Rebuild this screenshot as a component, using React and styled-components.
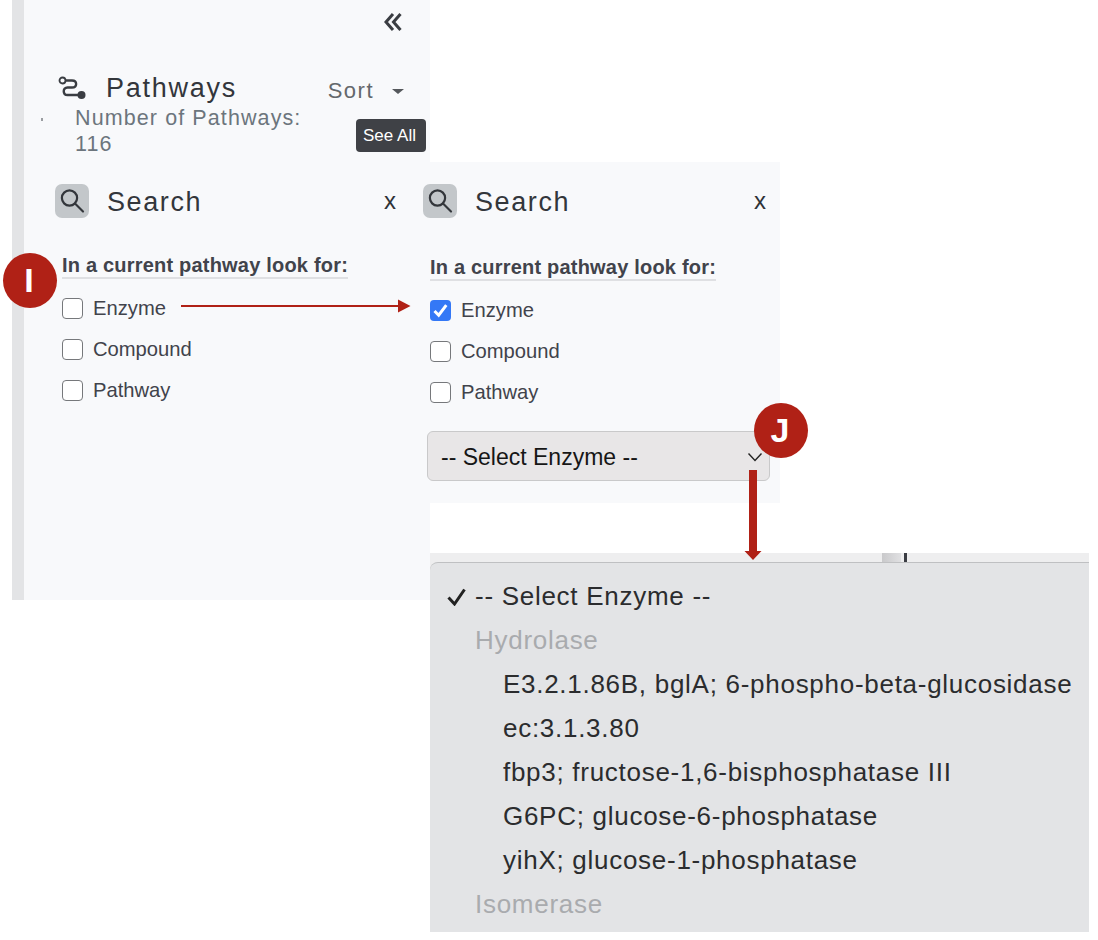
import React from "react";
import styled, { createGlobalStyle } from "styled-components";

const Global = createGlobalStyle`
  html, body { margin: 0; padding: 0; background: #fff; }
  body { font-family: "Liberation Sans", Arial, sans-serif; }
`;

const RED = "#b02116";

const Stage = styled.div`
  position: relative;
  width: 1098px;
  height: 940px;
  overflow: hidden;
  background: #fff;
`;

const Sidebar = styled.section`
  position: absolute;
  left: 12px;
  top: 0;
  width: 418px;
  height: 600px;
  box-sizing: border-box;
  background: #f8f9fb;
  border-left: 12px solid #e3e4e6;
  display: flex;
  flex-direction: column;
`;

const CollapseRow = styled.div`
  height: 72px;
  display: flex;
  justify-content: flex-end;
  align-items: flex-start;
  padding: 13px 28px 0 0;
  box-sizing: border-box;
`;

const PathHeader = styled.div`
  display: flex;
  align-items: center;
  height: 32px;
  padding-left: 34px;
`;

const PathTitle = styled.h2`
  margin: 0 0 0 18px;
  font-size: 27px;
  font-weight: 400;
  letter-spacing: 1.75px;
  line-height: 32px;
  color: #33363b;
`;

const Sort = styled.div`
  margin-left: auto;
  margin-right: 26px;
  display: flex;
  align-items: center;
  gap: 18px;
  font-size: 22px;
  letter-spacing: 1.5px;
  color: #64686c;
  padding-top: 6px;
`;

const Caret = styled.span`
  width: 0;
  height: 0;
  border-left: 6px solid transparent;
  border-right: 6px solid transparent;
  border-top: 5px solid #55585c;
`;

const Count = styled.div`
  margin: 1px 0 0 51px;
  width: 250px;
  font-size: 21.5px;
  line-height: 26px;
  letter-spacing: 1.1px;
  color: #6c757d;
`;

const Speck = styled.span`
  position: absolute;
  left: 41px;
  top: 118px;
  width: 2px;
  height: 3px;
  background: #9a9da1;
`;

const SearchHead = styled.div`
  display: flex;
  align-items: center;
  height: 34px;
  margin-top: ${(p) => p.$top}px;
  padding-left: ${(p) => p.$left}px;
  padding-right: ${(p) => p.$right}px;
`;

const SearchBadge = styled.span`
  width: 34px;
  height: 34px;
  border-radius: 7px;
  background: #c3c7ca;
  display: flex;
  align-items: center;
  justify-content: center;
  flex: none;
`;

const SearchTitle = styled.h3`
  margin: 2px 0 0 18px;
  font-size: 27px;
  font-weight: 400;
  letter-spacing: 1.6px;
  color: #33363b;
`;

const Close = styled.span`
  margin-left: auto;
  font-size: 24px;
  color: #2f3237;
`;

const Options = styled.div`
  margin-top: ${(p) => p.$top}px;
  padding-left: ${(p) => p.$left}px;
  display: flex;
  flex-direction: column;
  align-items: flex-start;
`;

const Heading = styled.div`
  font-size: 20px;
  letter-spacing: 0.2px;
  font-weight: 700;
  line-height: 24px;
  height: 24px;
  color: #41434b;
  border-bottom: 2px solid #dfe0e3;
  margin-bottom: 19px;
`;

const Option = styled.label`
  display: flex;
  align-items: center;
  height: 21px;
  margin-bottom: 20px;
  font-size: 20.2px;
  color: #41434b;
`;

const Box = styled.span`
  width: 21px;
  height: 21px;
  box-sizing: border-box;
  border-radius: 4px;
  margin-right: 10px;
  background: ${(p) => (p.$checked ? "#3478f6" : "#fff")};
  border: ${(p) => (p.$checked ? "none" : "1.5px solid #76787b")};
  display: flex;
  align-items: center;
  justify-content: center;
`;

const SecondPanel = styled.section`
  position: absolute;
  left: 416px;
  top: 162px;
  width: 364px;
  height: 341px;
  background: #f8f9fb;
  display: flex;
  flex-direction: column;
`;

const SelectBox = styled.div`
  width: 343px;
  height: 50px;
  box-sizing: border-box;
  margin: 8px 0 0 11px;
  padding: 2px 6px 0 13px;
  background: #e8e6e7;
  border: 1.5px solid #c9c9ca;
  border-radius: 6px;
  display: flex;
  align-items: center;
  justify-content: space-between;
  font-size: 23px;
  color: #161616;
`;

const Tooltip = styled.div`
  position: absolute;
  left: 356px;
  top: 119px;
  width: 70px;
  height: 33px;
  box-sizing: border-box;
  padding-right: 3px;
  border-radius: 4px;
  background: #3f4146;
  color: #fff;
  font-size: 17px;
  display: flex;
  align-items: center;
  justify-content: center;
`;

const Badge = styled.div`
  position: absolute;
  left: ${(p) => p.$x}px;
  top: ${(p) => p.$y}px;
  width: 54px;
  height: 55px;
  border-radius: 50%;
  background: ${RED};
  color: #fff;
  font-weight: 700;
  font-size: 34px;
  line-height: 55px;
  text-align: center;
  text-indent: -2px;
`;

const Arrow = styled.svg`
  position: absolute;
  left: ${(p) => p.$x}px;
  top: ${(p) => p.$y}px;
`;

const Dropdown = styled.section`
  position: absolute;
  left: 430px;
  top: 553px;
  width: 659px;
  height: 379px;
  display: flex;
  flex-direction: column;
  background: #eeeeef;
`;

const BehindStrip = styled.div`
  height: 9px;
  flex: none;
  display: flex;
  padding-left: 452px;
`;

const BehindBar = styled.span`
  width: 19px;
  background: linear-gradient(90deg, #c9c9cb, #e0e0e2);
`;

const BehindLine = styled.span`
  width: 3px;
  margin-left: 3px;
  background: #3b3d44;
`;

const Menu = styled.ul`
  margin: 0;
  padding: 11px 0 0;
  list-style: none;
  flex: 1;
  overflow: hidden;
  background: #e3e4e6;
  border-top: 1px solid #bfc0c2;
  border-top-left-radius: 8px;
`;

const MenuItem = styled.li`
  position: relative;
  height: 44px;
  line-height: 44px;
  font-size: 26px;
  letter-spacing: 0.72px;
  white-space: nowrap;
  padding-left: ${(p) => p.$indent}px;
  color: ${(p) => (p.$group ? "#a9abae" : "#2b2c2e")};
`;

const Tick = styled.svg`
  position: absolute;
  left: 17px;
  top: 14px;
`;

const items = [
  { t: "-- Select Enzyme --", i: 45, tick: true },
  { t: "Hydrolase", i: 45, g: true },
  { t: "E3.2.1.86B, bglA; 6-phospho-beta-glucosidase", i: 73 },
  { t: "ec:3.1.3.80", i: 73 },
  { t: "fbp3; fructose-1,6-bisphosphatase III", i: 73 },
  { t: "G6PC; glucose-6-phosphatase", i: 73 },
  { t: "yihX; glucose-1-phosphatase", i: 73 },
  { t: "Isomerase", i: 45, g: true },
];

const SearchIcon = () => (
  <svg width="28" height="28" viewBox="0 0 28 28" fill="none" stroke="#33363b" strokeWidth="2.2" strokeLinecap="round">
    <circle cx="11.5" cy="11" r="7.6" />
    <path d="M17 16.5 L25 24.5" />
  </svg>
);

const RouteIcon = () => (
  <svg width="30" height="28" viewBox="0 0 30 28" fill="none" style={{ flex: "none" }}>
    <circle cx="4.5" cy="6.5" r="3" stroke="#3a3d42" strokeWidth="1.8" />
    <path d="M8 6.5 H14 C19.5 6.5 19.5 13.5 14 13.5 H9.5 C4.5 13.5 4.5 21 9.5 21 H20" stroke="#3a3d42" strokeWidth="2.4" />
    <circle cx="23.5" cy="21" r="4" fill="#3a3d42" />
  </svg>
);

const Form = ({ checked }) => (
  <>
    <Heading>In a current pathway look for:</Heading>
    {["Enzyme", "Compound", "Pathway"].map((l, i) => (
      <Option key={l}>
        <Box $checked={checked && i === 0}>
          {checked && i === 0 && (
            <svg width="17" height="17" viewBox="0 0 17 17" fill="none" stroke="#fff" strokeWidth="3">
              <path d="M2.5 9 L6.7 13.2 L14.3 3.2" />
            </svg>
          )}
        </Box>
        {l}
      </Option>
    ))}
  </>
);

export default function App() {
  return (
    <Stage>
      <Global />
      <Sidebar>
        <CollapseRow>
          <svg width="18" height="18" viewBox="0 0 18 18" fill="none" stroke="#3a3d42" strokeWidth="3">
            <path d="M9 1 L2 9 L9 17 M16.5 1 L9.5 9 L16.5 17" />
          </svg>
        </CollapseRow>
        <PathHeader>
          <RouteIcon />
          <PathTitle>Pathways</PathTitle>
          <Sort>
            Sort
            <Caret />
          </Sort>
        </PathHeader>
        <Count>Number of Pathways: 116</Count>
        <SearchHead $top={27} $left={31} $right={34}>
          <SearchBadge>
            <SearchIcon />
          </SearchBadge>
          <SearchTitle>Search</SearchTitle>
          <Close>x</Close>
        </SearchHead>
        <Options $top={35} $left={38}>
          <Form />
        </Options>
      </Sidebar>

      <Speck />
      <Tooltip>See All</Tooltip>

      <SecondPanel>
        <SearchHead $top={22} $left={7} $right={14}>
          <SearchBadge>
            <SearchIcon />
          </SearchBadge>
          <SearchTitle>Search</SearchTitle>
          <Close>x</Close>
        </SearchHead>
        <Options $top={37} $left={14}>
          <Form checked />
        </Options>
        <SelectBox>
          -- Select Enzyme --
          <svg width="16" height="10" viewBox="0 0 16 10" fill="none" stroke="#222" strokeWidth="1.4">
            <path d="M1.5 1.5 L8 8.5 L14.5 1.5" />
          </svg>
        </SelectBox>
      </SecondPanel>

      <Dropdown>
        <BehindStrip>
          <BehindBar />
          <BehindLine />
        </BehindStrip>
        <Menu>
          {items.map((it) => (
            <MenuItem key={it.t} $indent={it.i} $group={it.g}>
              {it.tick && (
                <Tick width="20" height="18" viewBox="0 0 20 18" fill="none" stroke="#222" strokeWidth="3">
                  <path d="M1.5 9.5 L7.5 16 L17.5 1.5" />
                </Tick>
              )}
              {it.t}
            </MenuItem>
          ))}
        </Menu>
      </Dropdown>

      <Arrow $x={181} $y={299} width="230" height="14" viewBox="0 0 230 14">
        <path d="M0 6 H217 V0.5 L229.5 7 L217 13.5 V8 H0 Z" fill={RED} />
      </Arrow>
      <Arrow $x={744} $y={470} width="18" height="90" viewBox="0 0 18 90">
        <path d="M5 0 H13 V81 H17.5 L9 90 L0.5 81 H5 Z" fill={RED} />
      </Arrow>
      <Badge $x={3} $y={253}>I</Badge>
      <Badge $x={754} $y={403}>J</Badge>
    </Stage>
  );
}
